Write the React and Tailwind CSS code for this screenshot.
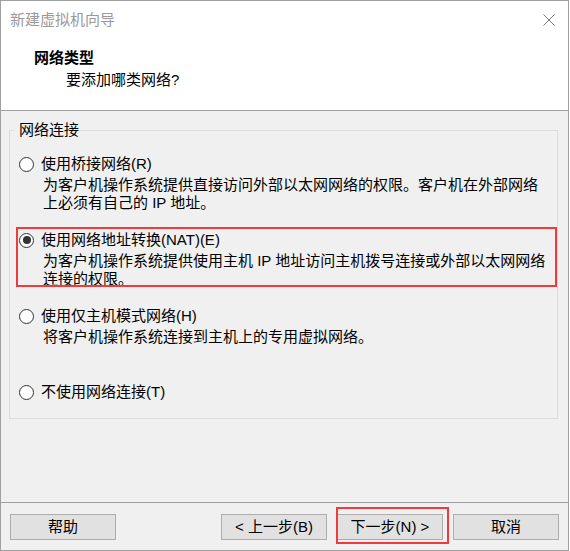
import React, { useState } from 'react';

const OPTIONS = [
  {
    id: 'bridged',
    label: '使用桥接网络(R)',
    desc: ['为客户机操作系统提供直接访问外部以太网网络的权限。客户机在外部网络', '上必须有自己的 IP 地址。'],
  },
  {
    id: 'nat',
    label: '使用网络地址转换(NAT)(E)',
    desc: ['为客户机操作系统提供使用主机 IP 地址访问主机拨号连接或外部以太网网络', '连接的权限。'],
    marked: true,
  },
  {
    id: 'hostonly',
    label: '使用仅主机模式网络(H)',
    desc: ['将客户机操作系统连接到主机上的专用虚拟网络。', ''],
  },
  {
    id: 'none',
    label: '不使用网络连接(T)',
    desc: [],
  },
];

function Radio({ checked }) {
  return (
    <span className="w-[15px] h-[15px] rounded-full border border-[#333333] bg-white flex items-center justify-center shrink-0">
      {checked && <span className="w-[8px] h-[8px] rounded-full bg-[#333333]" />}
    </span>
  );
}

function WizardButton({ children }) {
  return (
    <button
      type="button"
      className="w-[106px] h-[26px] border border-[#adadad] bg-[#e1e1e1] text-[15px] leading-[20px] text-black flex items-center justify-center"
    >
      {children}
    </button>
  );
}

export default function App() {
  const [network, setNetwork] = useState('nat');

  return (
    <div className="w-[570px] h-[551px] bg-white">
      <div className="w-[569px] h-[551px] border border-[#a0a0a0] bg-[#f0f0f0] flex flex-col text-[15px] text-black font-['Liberation_Sans','Noto_Sans_CJK_SC',sans-serif]">

        {/* HEADER */}
        <div className="h-[110px] shrink-0 bg-white border-b border-[#a0a0a0] flex flex-col">
          <div className="flex items-center justify-between h-[20px] mt-[9px] pl-[9px] pr-[13px]">
            <span className="leading-[20px] text-[#9a9a9a]">新建虚拟机向导</span>
            <svg width="12" height="12" viewBox="0 0 12 12">
              <path d="M0.5 0.5 L11.5 11.5 M11.5 0.5 L0.5 11.5" stroke="#7a7a7a" strokeWidth="1" fill="none" />
            </svg>
          </div>
          <div className="mt-[18px] pl-[33px] leading-[20px] font-bold">网络类型</div>
          <div className="mt-[2px] pl-[65px] leading-[20px]">要添加哪类网络?</div>
        </div>

        {/* BODY */}
        <div className="flex-1">
          <div className="mt-[19px] ml-[8px] w-[549px] h-[289px] border border-[#dcdcdc] flex flex-col">
            <div className="-mt-[11px] ml-[4px] pl-[5px] pr-[1px] w-fit bg-[#f0f0f0] leading-[20px]">网络连接</div>

            <div className="mt-[14px] pl-[9px] flex flex-col gap-[18px]">
              {OPTIONS.map((opt) => (
                <div
                  key={opt.id}
                  className="relative flex flex-col cursor-default"
                  onClick={() => setNetwork(opt.id)}
                >
                  <div className="flex items-center h-[20px]">
                    <Radio checked={network === opt.id} />
                    <span className="ml-[7px] leading-[20px] whitespace-nowrap">{opt.label}</span>
                  </div>
                  {opt.desc.length > 0 && (
                    <div className="mt-[2px] pl-[24px] flex flex-col">
                      {opt.desc.map((line, i) => (
                        <span key={i} className="h-[18px] leading-[18px] whitespace-nowrap">{line}</span>
                      ))}
                    </div>
                  )}
                  {opt.marked && (
                    <span className="absolute -left-[3px] -top-[3px] right-0 bottom-[1px] border-2 border-[#ef3b3b] pointer-events-none" />
                  )}
                </div>
              ))}
            </div>
          </div>
        </div>

        {/* FOOTER */}
        <div className="h-[48px] shrink-0 border-t border-[#a0a0a0] flex items-start justify-between pt-[11px] pl-[9px] pr-[9px]">
          <WizardButton>帮助</WizardButton>
          <div className="flex gap-[10px]">
            <WizardButton>&lt; 上一步(B)</WizardButton>
            <div className="relative">
              <WizardButton>下一步(N) &gt;</WizardButton>
              <span className="absolute -left-[1px] -right-[6px] -top-[7px] -bottom-[4px] border-2 border-[#ef3b3b] pointer-events-none" />
            </div>
            <WizardButton>取消</WizardButton>
          </div>
        </div>

      </div>
    </div>
  );
}
